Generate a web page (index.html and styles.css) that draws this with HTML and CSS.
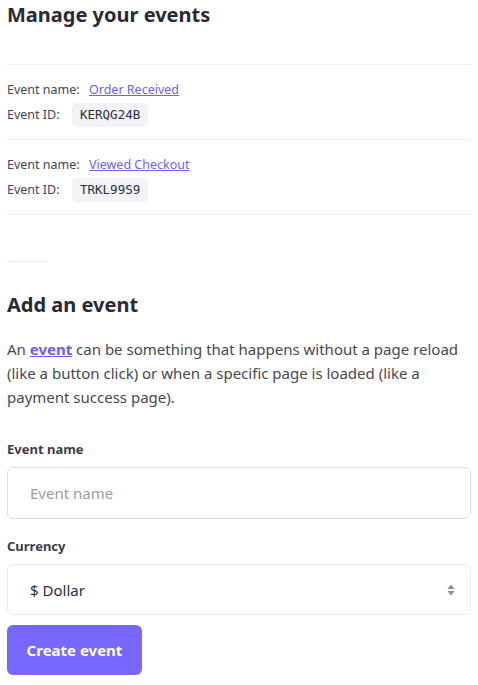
FILE: index.html
```html
<!DOCTYPE html>
<html>
<head>
<meta charset="utf-8">
<link rel="stylesheet" href="styles.css">
</head>
<body>
<main class="page">
  <h1 class="title">Manage your events</h1>
  <ul class="events">
    <li class="event">
      <div class="row"><span class="key">Event name:</span><a class="link" href="#">Order Received</a></div>
      <div class="row"><span class="key">Event ID:</span><code class="badge">KERQG24B</code></div>
    </li>
    <li class="event">
      <div class="row"><span class="key">Event name:</span><a class="link" href="#">Viewed Checkout</a></div>
      <div class="row"><span class="key">Event ID:</span><code class="badge">TRKL99S9</code></div>
    </li>
  </ul>
  <hr class="short">
  <h2 class="title title-2">Add an event</h2>
  <p class="intro">An <a class="strong-link" href="#">event</a> can be something that happens without a page reload (like a button click) or when a specific page is loaded (like a payment success page).</p>
  <form class="form">
    <label class="label" for="name">Event name</label>
    <input class="field" id="name" type="text" placeholder="Event name">
    <label class="label label-2" for="cur">Currency</label>
    <div class="select" id="cur">
      <span>$ Dollar</span>
      <svg class="arrows" width="8" height="12" viewBox="0 0 8 12"><path d="M4 0.5 L7.5 5 H0.5 Z M4 11.5 L7.5 7 H0.5 Z" fill="#8a8aa0"/></svg>
    </div>
    <button class="btn" type="button">Create event</button>
  </form>
</main>
</body>
</html>
```
FILE: styles.css
```css
* { box-sizing: border-box; }
html, body { margin: 0; padding: 0; background: #fff; }
body {
  font-family: "Noto Sans", "Open Sans", sans-serif;
  color: #2e2e3a;
}
.page { padding: 0 7px; }
.title {
  margin: 0;
  font-size: 20px;
  line-height: 30px;
  font-weight: 700;
  color: #2a2a36;
}
.events {
  list-style: none;
  margin: 34px 0 0;
  padding: 0;
  border-top: 1px solid #efeff4;
}
.event {
  padding: 14px 0 12px;
  border-bottom: 1px solid #efeff4;
  display: flex;
  flex-direction: column;
  gap: 2px;
}
.row {
  display: flex;
  align-items: center;
  font-size: 12.5px;
  line-height: 22px;
  color: #454552;
}
.key { width: 82px; flex: none; }
.row:nth-child(2) .key { width: 65px; }
.link { color: #7060f5; text-decoration: underline; }
.badge {
  font-family: "DejaVu Sans Mono", monospace;
  font-size: 12.5px;
  background: #f3f3f7;
  color: #2e2e3a;
  border-radius: 5px;
  padding: 0 8px;
  line-height: 24px;
}
.short {
  width: 41px;
  margin: 46px 0 0;
  border: 0;
  border-top: 1px solid #ecebff;
}
.title-2 { margin-top: 28px; }
.intro {
  margin: 17px 0 0;
  font-size: 15px;
  line-height: 24px;
  color: #474753;
}
.strong-link { color: #6b5cf6; font-weight: 700; text-decoration: underline; }
.form { display: flex; flex-direction: column; margin-top: 31px; }
.label {
  font-size: 13px;
  font-weight: 700;
  line-height: 18px;
  color: #3c3c48;
  margin-bottom: 9px;
}
.label-2 { margin-top: 18px; }
.field {
  height: 52px;
  border: 1px solid #dcdce4;
  border-radius: 6px;
  padding: 0 22px;
  font: inherit;
  font-size: 15px;
  color: #2e2e3a;
}
.field::placeholder { color: #9c9ca8; }
.select {
  height: 51px;
  border: 1px solid #ebebf3;
  border-radius: 6px;
  padding: 0 15px 0 22px;
  display: flex;
  align-items: center;
  justify-content: space-between;
  font-size: 15px;
  color: #2e2e3a;
}
.btn {
  align-self: flex-start;
  margin-top: 10px;
  height: 50px;
  width: 135px;
  border: 0;
  border-radius: 6px;
  background: #7767fc;
  color: #fff;
  font-family: inherit;
  font-weight: 700;
  font-size: 15px;
}
```
